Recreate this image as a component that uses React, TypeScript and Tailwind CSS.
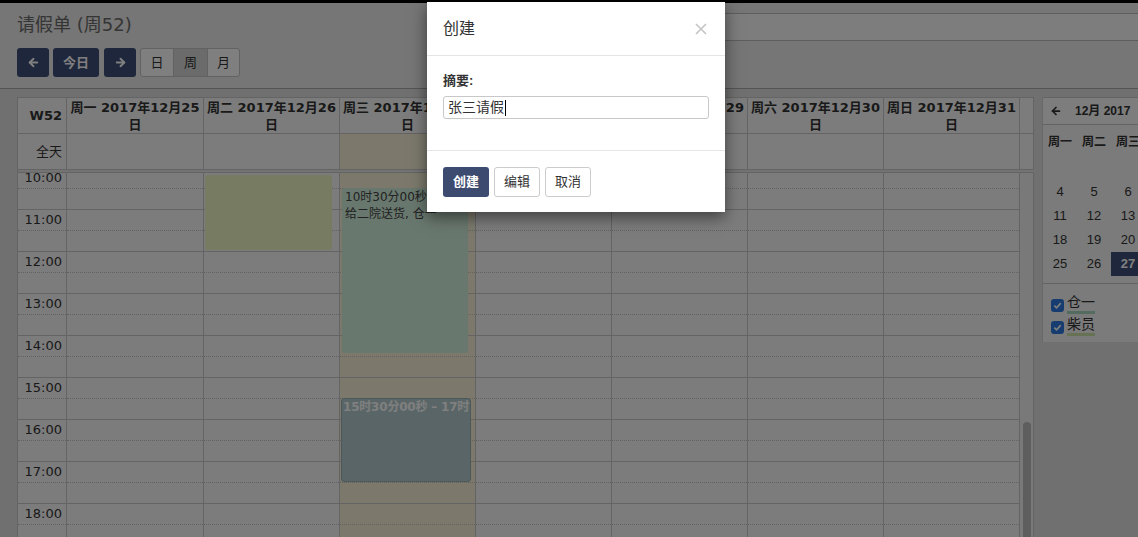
import { ArrowLeft, ArrowRight } from "lucide-react";

const HOURS = [10, 11, 12, 13, 14, 15, 16, 17, 18];

const DAY_HEADERS = [
  "周一 2017年12月25日",
  "周二 2017年12月26日",
  "周三 2017年12月27日",
  "周四 2017年12月28日",
  "周五 2017年12月29日",
  "周六 2017年12月30日",
  "周日 2017年12月31日",
];

const MINI_WEEKS = [
  [0, 0, 0, 0, 1, 2, 3],
  [4, 5, 6, 7, 8, 9, 10],
  [11, 12, 13, 14, 15, 16, 17],
  [18, 19, 20, 21, 22, 23, 24],
  [25, 26, 27, 28, 29, 30, 31],
];

const GRID_COLS = "grid grid-cols-[49px_137px_repeat(6,136px)_14px]";

function SlotRows() {
  return (
    <>
      {HOURS.map((h) => (
        <div key={h}>
          <div className="h-[21px] border-b border-dotted border-[#c4c4c4]" />
          <div className="h-[21px] border-b border-[#c8c8c8]" />
        </div>
      ))}
    </>
  );
}

function NavButton({ children, className = "" }: { children: React.ReactNode; className?: string }) {
  return (
    <button
      className={`flex h-[29px] items-center justify-center rounded-[3px] bg-[#3e4e78] text-[13px] font-bold text-white ${className}`}
    >
      {children}
    </button>
  );
}

export default function App() {
  return (
    <div className="relative h-[537px] w-[1138px] overflow-hidden bg-[#e0e0e0] font-['Liberation_Sans','Noto_Sans_CJK_SC',sans-serif] text-[#333]">
      <div className="h-[3px] bg-black" />

      {/* Page header */}
      <div className="h-[85px] bg-[#ececec] pl-[17px]">
        <div className="flex items-start">
          <h1 className="pt-[10px] font-['DejaVu_Sans','Noto_Sans_CJK_SC',sans-serif] text-[18px] leading-[24px] text-[#6a6a6a]">
            请假单 (周52)
          </h1>
          <div className="ml-auto mt-[10px] h-[28px] w-[560px] border-y border-l border-[#bdbdbd] bg-[#fbfbfb]" />
        </div>
        <div className="mt-[7px] flex items-center">
          <NavButton className="w-[32px]">
            <ArrowLeft size={13} strokeWidth={3.5} />
          </NavButton>
          <NavButton className="ml-[4px] w-[46px]">今日</NavButton>
          <NavButton className="ml-[5px] w-[32px]">
            <ArrowRight size={13} strokeWidth={3.5} />
          </NavButton>
          <div className="ml-[4px] flex h-[29px] overflow-hidden rounded-[3px] border border-[#c4c4c4] bg-white text-[13px] text-[#333]">
            <div className="flex w-[33px] items-center justify-center border-r border-[#c4c4c4]">日</div>
            <div className="flex w-[34px] items-center justify-center border-r border-[#c4c4c4] bg-[#d6d6d6]">周</div>
            <div className="flex w-[31px] items-center justify-center">月</div>
          </div>
        </div>
      </div>

      {/* Calendar section */}
      <div className="flex gap-[8px] border-t border-[#a9a9a9] pl-[17px] pt-[8px]">
        <div className="w-[1017px] shrink-0 border-l border-t border-[#c8c8c8] bg-[#f8f8f8] font-['DejaVu_Sans','Noto_Sans_CJK_SC',sans-serif]">
          {/* Day headers */}
          <div className={GRID_COLS}>
            <div className="flex h-[36px] items-center justify-end border-b border-r border-[#c8c8c8] pr-[4px] text-[13px] font-bold">
              W52
            </div>
            {DAY_HEADERS.map((d) => (
              <div
                key={d}
                className="flex h-[36px] items-center justify-center border-b border-r border-[#c8c8c8] px-px text-center text-[13px] font-bold leading-[17px]"
              >
                {d}
              </div>
            ))}
            <div className="h-[36px] border-b border-r border-[#c8c8c8]" />
          </div>

          {/* All day row */}
          <div className={GRID_COLS}>
            <div className="flex h-[36px] items-center justify-end border-b border-r border-[#c8c8c8] pr-[4px] text-[13px]">
              全天
            </div>
            {DAY_HEADERS.map((d, i) => (
              <div
                key={d}
                className={`h-[36px] border-b border-r border-[#c8c8c8] ${i === 2 ? "bg-[#f9f3d8]" : ""}`}
              />
            ))}
            <div className="h-[36px] border-b border-r border-[#c8c8c8]" />
          </div>
          <div className="h-[3px] border-b border-[#c8c8c8] bg-[#e6e6e6]" />

          {/* Time grid */}
          <div className={`${GRID_COLS} h-[364px] overflow-hidden`}>
            <div className="-mt-[5px] border-r border-[#c8c8c8]">
              {HOURS.map((h) => (
                <div key={h}>
                  <div className="h-[21px] border-b border-dotted border-[#c4c4c4] pr-[4px] text-right text-[13px] leading-[20px]">
                    {h}:00
                  </div>
                  <div className="h-[21px] border-b border-[#c8c8c8]" />
                </div>
              ))}
            </div>
            {DAY_HEADERS.map((d, i) => (
              <div
                key={d}
                className={`relative -mt-[5px] border-r border-[#c8c8c8] ${i === 2 ? "bg-[#f9f3d8]" : ""}`}
              >
                <SlotRows />
                {i === 1 && (
                  <div className="absolute left-px top-[7px] h-[75px] w-[127px] rounded-[3px] bg-[#edf6c4]" />
                )}
                {i === 2 && (
                  <>
                    <div className="absolute left-[2px] top-[20px] h-[165px] w-[126px] overflow-hidden rounded-[3px] bg-[#d2f0dd] pl-[3px] pt-px text-[12px] leading-[17px] text-[#444]">
                      <div className="whitespace-nowrap">10时30分00秒 – 14时30分00秒</div>
                      <div>给二院送货, 仓一</div>
                    </div>
                    <div className="absolute left-px top-[230px] h-[84px] w-[130px] overflow-hidden rounded-[3px] border border-[#98b3b7] bg-[#b3cbcc] pl-px text-[12px] font-bold leading-[17px] text-white">
                      <div className="whitespace-nowrap tracking-[-0.2px]">15时30分00秒 – 17时30分00秒</div>
                    </div>
                  </>
                )}
              </div>
            ))}
            <div className="border-r border-[#c8c8c8] bg-[#f2f2f2] pl-[3px] pt-[249px]">
              <div className="h-full w-[8px] rounded-t-full bg-[#bcbcbc]" />
            </div>
          </div>
        </div>

        {/* Side panel */}
        <div className="h-[245px] w-[240px] shrink-0 border-l border-[#d0d0d0] bg-[#f6f6f6]">
          <div className="flex h-[28px] items-center border-y border-r border-[#c8c8c8] bg-[#fafafa] pl-[7px] text-[#333]">
            <ArrowLeft size={12} strokeWidth={3.5} />
            <span className="ml-[13px] text-[12px] font-bold">12月 2017</span>
          </div>
          <div className="pt-[3px]">
            <div className="grid grid-cols-[repeat(7,34px)]">
              {["周一", "周二", "周三", "周四", "周五", "周六", "周日"].map((n) => (
                <div key={n} className="flex h-[28px] items-center justify-center text-[12px] font-bold">
                  {n}
                </div>
              ))}
            </div>
            {MINI_WEEKS.map((w, wi) => (
              <div key={wi} className="grid grid-cols-[repeat(7,34px)]">
                {w.map((d, di) => (
                  <div
                    key={di}
                    className={`flex h-[24px] items-center justify-center text-[13px] ${
                      d === 27 ? "bg-[#3e4e78] font-bold text-white" : "text-[#333]"
                    }`}
                  >
                    {d > 0 ? d : ""}
                  </div>
                ))}
              </div>
            ))}
          </div>
          <div className="mt-[7px] border-t border-[#c8c8c8] pl-[8px] pt-[8px]">
            {[
              { name: "仓一", bar: "bg-[#a9d9c0]" },
              { name: "柴员", bar: "bg-[#cfe3a6]" },
            ].map((c) => (
              <div key={c.name} className="flex h-[22px] items-center">
                <span className="mt-[4px] flex h-[13px] w-[13px] items-center justify-center rounded-[3px] bg-[#2f7be0]">
                  <svg width="9" height="9" viewBox="0 0 10 10" fill="none">
                    <path d="M1.5 5.2 4 7.6 8.6 2.4" stroke="white" strokeWidth="1.8" />
                  </svg>
                </span>
                <span className={`ml-[3px] pb-[3px] text-[14px] leading-[18px] ${c.bar}`}>
                  <span className="block bg-[#f6f6f6]">{c.name}</span>
                </span>
              </div>
            ))}
          </div>
        </div>
      </div>

      {/* Modal backdrop */}
      <div className="absolute inset-0 bg-black/50" />

      {/* Modal */}
      <div className="absolute left-[427px] top-[2px] w-[298px] bg-white shadow-[0_5px_15px_rgba(0,0,0,0.5)]">
        <div className="flex h-[54px] items-center justify-between border-b border-[#e5e5e5] pl-[16px] pr-[18px]">
          <span className="text-[16px] text-[#333]">创建</span>
          <svg width="12" height="12" viewBox="0 0 12 12">
            <path d="M1 1 11 11M11 1 1 11" stroke="#c4c4c4" strokeWidth="1.6" />
          </svg>
        </div>
        <div className="h-[95px] border-b border-[#e5e5e5] px-[16px] pt-[16px]">
          <div className="text-[13px] font-bold leading-[18px] text-[#333]">摘要:</div>
          <div className="mt-[6px] flex h-[23px] items-center rounded-[3px] border border-[#c8c8c8] px-[4px] text-[14px] text-[#333]">
            张三请假
            <span className="ml-px h-[16px] w-px bg-black" />
          </div>
        </div>
        <div className="flex gap-[5px] px-[16px] pb-[15px] pt-[16px] text-[13px]">
          <button className="h-[30px] w-[46px] rounded-[3px] bg-[#3e4b70] font-bold text-white">创建</button>
          <button className="h-[30px] w-[46px] rounded-[3px] border border-[#ccc] bg-white text-[#333]">编辑</button>
          <button className="h-[30px] w-[46px] rounded-[3px] border border-[#ccc] bg-white text-[#333]">取消</button>
        </div>
      </div>
    </div>
  );
}
